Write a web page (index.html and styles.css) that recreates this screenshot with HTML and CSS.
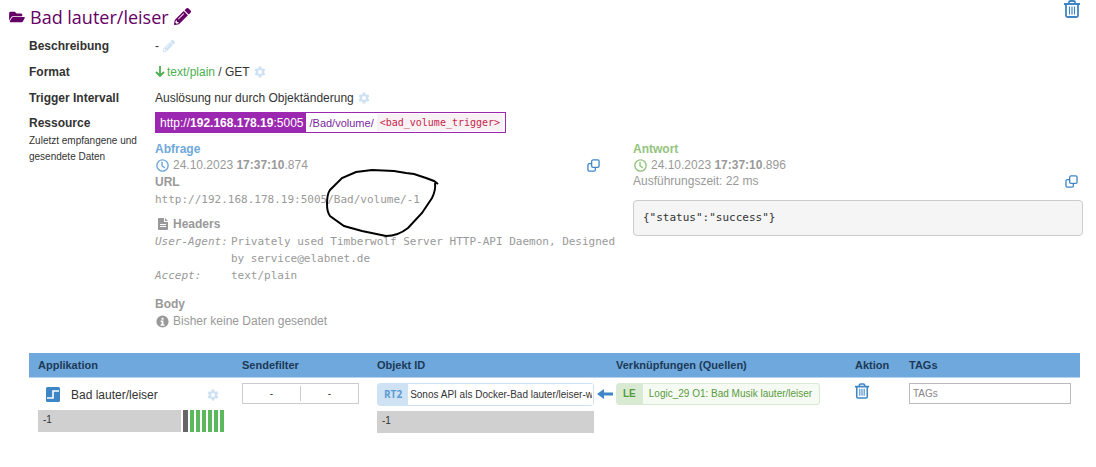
FILE: index.html
```html
<!DOCTYPE html>
<html lang="de">
<head>
	<meta charset="utf-8">
	<title>Bad lauter/leiser</title>
	<link rel="stylesheet" href="styles.css">
</head>
<body>

<!-- shared icons -->
<svg class="sprite" aria-hidden="true">
	<symbol id="i-folder" viewBox="0 0 576 512"><path d="M572.700 292.100L500.300 416.200A64 64 0 0 1 445 448H45c-18.500 0-30-20.100-20.700-36.100l72.400-124.100A64 64 0 0 1 152 256h400c18.500 0 30 20.100 20.700 36.100zM152 224h328v-48c0-26.500-21.500-48-48-48H272l-64-64H48C21.500 64 0 85.500 0 112v278l69-118.400C86.200 242.200 118 224 152 224z"/></symbol>
	<symbol id="i-pencil" viewBox="0 0 512 512"><path d="M498 142l-46 46c-5 5-12 5-17 0L324 77c-5-5-5-12 0-17l46-46c19-19 49-19 68 0l60 60c19 19 19 49 0 68zM284 100L22 362 0 484c-3 16 12 30 28 28l122-22 262-262c5-5 5-12 0-17L301 100c-5-5-12-5-17 0zM124 340c-5-5-5-14 0-19l154-154c5-5 14-5 19 0s5 14 0 19L143 340c-5 5-14 5-19 0zm-36 84h48v36l-64 12-32-32 12-65h36v49z"/></symbol>
	<symbol id="i-gear" viewBox="0 0 24 24"><path fill-rule="evenodd" d="M9.500 1h5l.6 3.300 2 1.200 3.200-1.200 2.500 4.300-2.600 2.200v2.400l2.600 2.200-2.500 4.300-3.200-1.200-2 1.200-.6 3.300h-5l-.6-3.300-2-1.200-3.200 1.200-2.500-4.300 2.600-2.200v-2.400L1.200 8.600l2.500-4.300 3.200 1.200 2-1.200zM12 8a4 4 0 1 0 0 8 4 4 0 0 0 0-8z"/></symbol>
	<symbol id="i-clock" viewBox="0 0 16 16"><g fill="none" stroke="currentColor" stroke-width="1.500"><circle cx="8" cy="8" r="6"/><path d="M7.500 4v4.500l3 2"/></g></symbol>
	<symbol id="i-copy" viewBox="0 0 14 14"><g fill="none" stroke="currentColor" stroke-width="1.400"><rect x="5" y="1" width="8" height="8" rx="1.500"/><path d="M5 5H2.500A1.500 1.500 0 0 0 1 6.500v5A1.500 1.500 0 0 0 2.500 13h5A1.500 1.500 0 0 0 9 11.500V9"/></g></symbol>
	<symbol id="i-trash" viewBox="0 0 16 18"><g fill="none" stroke="currentColor" stroke-width="1.800"><path d="M0 4h16M5 4V2.500Q5 1 6.500 1h3Q11 1 11 2.500V4M2 4v11.500Q2 17 3.500 17h9q1.500 0 1.500-1.500V4"/><path stroke-width="1.200" d="M5.500 6.500v8M8 6.500v8M10.500 6.500v8"/></g></symbol>
</svg>

<header class="title">
	<svg class="folder"><use href="#i-folder"/></svg>
	<h1>Bad lauter/leiser</h1>
	<button type="button" aria-label="Name bearbeiten"><svg class="pencil"><use href="#i-pencil"/></svg></button>
	<button type="button" class="remove" aria-label="Löschen"><svg class="trash-big"><use href="#i-trash"/></svg></button>
</header>

<main>
	<dl class="props">
		<dt>Beschreibung</dt>
		<dd>- <button type="button" class="pale" aria-label="Beschreibung bearbeiten"><svg class="icon"><use href="#i-pencil"/></svg></button></dd>

		<dt>Format</dt>
		<dd>
			<svg class="down" viewBox="0 0 10 12"><path d="M5 0v10M1 6l4 4 4-4" fill="none" stroke="currentColor" stroke-width="1.800"/></svg>
			<span><span class="green">text/plain</span> / GET</span>
			<button type="button" class="pale" aria-label="Format einstellen"><svg class="icon"><use href="#i-gear"/></svg></button>
		</dd>

		<dt>Trigger Intervall</dt>
		<dd>Auslösung nur durch Objektänderung <button type="button" class="pale" aria-label="Trigger einstellen"><svg class="icon"><use href="#i-gear"/></svg></button></dd>

		<dt class="resource">Ressource <small>Zuletzt empfangene und gesendete Daten</small></dt>
		<dd class="resource">
			<div class="url"><span class="host">http://<b>192.168.178.19</b>:5005</span><span class="path">/Bad/volume/</span><code>&lt;bad_volume_trigger&gt;</code></div>

			<div class="exchange">
				<section class="request">
					<h2 class="blue">Abfrage</h2>
					<div class="stamp">
						<svg class="clock blue"><use href="#i-clock"/></svg>
						<span>24.10.2023 <b>17:37:10</b>.874</span>
						<button type="button" class="copy" aria-label="Abfrage kopieren"><svg><use href="#i-copy"/></svg></button>
					</div>
					<h3>URL</h3>
					<p class="mono address">http://192.168.178.19:5005/Bad/volume/-1
						<svg class="marker" viewBox="0 0 114 72"><path d="M112 14L108 11 100 8 88 4 80 3 68 1 46 0 30 2 16 8 4 20Q1 24 1 34 1 42 4 46L18 56 36 61 60 66Q72 66 82 58L96 43 106 28Q110 20 109 13"/></svg>
					</p>
					<h3 class="with-icon">
						<svg class="file" viewBox="0 0 10 12"><path fill-rule="evenodd" d="M1 0h5v4h4v7q0 1-1 1H1q-1 0-1-1V1q0-1 1-1zm6 0l3 3H7zM2 6v1h6V6zm0 2v1h6V8z"/></svg>
						Headers
					</h3>
					<dl class="headers mono">
						<dt>User-Agent:</dt><dd>Privately used Timberwolf Server HTTP-API Daemon, Designed by service@elabnet.de</dd>
						<dt>Accept:</dt><dd>text/plain</dd>
					</dl>
					<h3>Body</h3>
					<p class="stamp">
						<svg class="clock" viewBox="0 0 16 16"><path fill-rule="evenodd" d="M8 1.500a6.500 6.500 0 1 0 0 13 6.500 6.500 0 0 0 0-13zM7 4h2v2H7zM6 7h3v4h1v1.500H6V11h1V8.500H6z"/></svg>
						<span>Bisher keine Daten gesendet</span>
					</p>
				</section>

				<section class="response">
					<h2 class="lime">Antwort</h2>
					<div class="stamp">
						<svg class="clock lime"><use href="#i-clock"/></svg>
						<span>24.10.2023 <b>17:37:10</b>.896</span>
					</div>
					<div class="stamp">
						<span>Ausführungszeit: 22 ms</span>
						<button type="button" class="copy" aria-label="Antwort kopieren"><svg><use href="#i-copy"/></svg></button>
					</div>
					<pre class="mono">{"status":"success"}</pre>
				</section>
			</div>
		</dd>
	</dl>

	<table>
		<colgroup>
			<col class="c-app"><col class="c-filter"><col class="c-object"><col class="c-arrow"><col class="c-links"><col class="c-action"><col>
		</colgroup>
		<thead>
			<tr>
				<th>Applikation</th>
				<th>Sendefilter</th>
				<th>Objekt ID</th>
				<th class="tight"></th>
				<th class="tight">Verknüpfungen (Quellen)</th>
				<th>Aktion</th>
				<th>TAGs</th>
			</tr>
		</thead>
		<tbody>
			<tr>
				<td>
					<div class="app">
						<svg class="app-icon" viewBox="0 0 14 15"><rect width="14" height="15" rx="1.500" fill="#3d85c6"/><path d="M1 11h6V4h6" fill="none" stroke="#fff" stroke-width="1.600"/></svg>
						<span>Bad lauter/leiser</span>
						<button type="button" class="pale" aria-label="Applikation einstellen"><svg class="icon"><use href="#i-gear"/></svg></button>
					</div>
					<div class="state">
						<div class="value">-1</div>
						<div class="bars"><i class="dark"></i><i></i><i></i><i></i><i></i><i></i><i></i></div>
					</div>
				</td>
				<td><div class="filter"><span>-</span><span>-</span></div></td>
				<td>
					<div class="object"><label for="object">RT2</label><input id="object" type="text" value="Sonos API als Docker-Bad lauter/leiser-w"></div>
					<div class="value">-1</div>
				</td>
				<td class="tight"><svg class="arrow" viewBox="0 0 16 12"><path d="M0 6l7-5v3.500h9v3H7V11z" fill="#3d85c6"/></svg></td>
				<td class="tight"><a class="link" href="#"><span>LE</span><span>Logic_29 O1: Bad Musik lauter/leiser</span></a></td>
				<td><button type="button" class="action" aria-label="Verknüpfung löschen"><svg class="trash"><use href="#i-trash"/></svg></button></td>
				<td><input class="tags" type="text" placeholder="TAGs" aria-label="TAGs"></td>
			</tr>
		</tbody>
	</table>
</main>

</body>
</html>
```

FILE: styles.css
```css
* {
  box-sizing: border-box;
}

body {
  margin: 0;
  font: 12px/16px "Liberation Sans", Arial, sans-serif;
  color: #333;
  background: #fff;
}

h1, h2, h3, p, dl, dd, pre {
  margin: 0;
}

h2, h3 {
  font-size: 12px;
}

button {
  display: inline-flex;
  padding: 0;
  border: 0;
  background: none;
  color: inherit;
  cursor: pointer;
}

svg {
  display: block;
  flex: none;
  fill: currentColor;
}

.sprite {
  position: absolute;
  width: 0;
  height: 0;
}

.blue { color: #6fa8dc; }
.lime { color: #93c47d; }
.green { color: #4caf50; }
.pale { color: #cfe2f3; }

.icon {
  width: 12px;
  height: 12px;
}

/* title */

.title {
  display: flex;
  align-items: center;
  height: 33px;
  padding: 0 16px 0 9px;
  color: #660066;
}

.title h1 {
  margin: 0 5px;
  font: 500 18px/24px "Open Sans", sans-serif;
}

.folder {
  width: 16px;
  height: 14px;
}

.pencil {
  width: 17px;
  height: 17px;
}

.remove {
  margin-left: auto;
  align-self: flex-start;
  color: #3d85c6;
}

.trash-big {
  width: 16px;
  height: 18px;
}

/* properties */

main {
  padding: 0 13px 0 29px;
}

.props {
  display: grid;
  grid-template-columns: 126px 1fr;
}

.props > dt {
  font-weight: bold;
  line-height: 26px;
}

.props > dt.resource {
  line-height: 24px;
}

.props > dd {
  display: flex;
  align-items: center;
  gap: 4px;
  min-height: 26px;
}

.props > dt small {
  display: block;
  margin-top: -2px;
  font-size: 10px;
  font-weight: normal;
  line-height: 16px;
}

.props > dd.resource {
  display: block;
  padding-top: 1px;
  min-width: 0;
}

.down {
  width: 10px;
  height: 12px;
  color: #4caf50;
  margin-right: -2px;
}

.url {
  display: inline-flex;
  align-items: center;
  height: 21px;
  border: 1px solid #9c27b0;
  color: #7b1fa2;
  vertical-align: top;
}

.host {
  padding: 2px 3px 2px 4px;
  background: #9c27b0;
  color: #fff;
}

.path {
  padding: 0 3px;
  font-size: 11px;
}

.url code {
  margin-right: 2px;
  padding: 0 3px;
  background: #f9f2f4;
  color: #c7254e;
  font: 10px/17px "DejaVu Sans Mono", monospace;
}

.exchange {
  display: grid;
  grid-template-columns: 1fr 1fr;
  gap: 28px;
  padding-top: 8px;
  color: #999;
}

.stamp {
  display: flex;
  align-items: center;
  gap: 3px;
  height: 16px;
}

.clock {
  width: 15px;
  height: 15px;
}

.copy {
  margin-left: auto;
  margin-right: 5px;
  color: #3d85c6;
}

.copy svg {
  width: 13px;
  height: 13px;
}

.mono {
  font: 11px/17px "DejaVu Sans Mono", monospace;
}

.address {
  position: relative;
}

/* hand-drawn ring round the end of the address */
.marker {
  position: absolute;
  left: 171px;
  top: -21px;
  width: 114px;
  height: 72px;
  overflow: visible;
  fill: none;
  stroke: #000;
  stroke-width: 2;
}

.with-icon {
  display: flex;
  align-items: center;
  gap: 5px;
  padding: 7px 0 0 3px;
}

.file {
  width: 10px;
  height: 12px;
}

.headers {
  display: grid;
  grid-template-columns: 76px 1fr;
  margin-right: -12px;
  padding-bottom: 11px;
}

.headers dt {
  font-style: italic;
}

.request h3 {
  line-height: 18px;
}

.response pre {
  margin-top: 11px;
  padding: 8px 9px;
  border: 1px solid #ccc;
  border-radius: 4px;
  background: #f5f5f5;
  color: #333;
  line-height: 18px;
}

/* object table */

table {
  width: calc(100% - 3px);
  margin-top: 24px;
  table-layout: fixed;
  border-collapse: collapse;
}

.c-app { width: 204px; }
.c-filter { width: 135px; }
.c-object { width: 229px; }
.c-arrow { width: 19px; }
.c-links { width: 230px; }
.c-action { width: 54px; }

th {
  height: 24px;
  padding: 0 9px;
  background: #6fa8dc;
  border-bottom: 1px solid #b8d3ee;
  color: #1c3a57;
  font-size: 11px;
  text-align: left;
}

td {
  padding: 5px 9px;
  vertical-align: top;
  font-size: 10px;
}

td:nth-child(3) {
  padding-right: 3px;
}

th.tight, td.tight {
  padding-left: 0;
  padding-right: 0;
}

.app {
  display: flex;
  align-items: center;
  gap: 11px;
  height: 24px;
  padding: 0 5px 0 8px;
  font-size: 12px;
}

.app .pale {
  margin-left: auto;
}

.app-icon {
  width: 14px;
  height: 15px;
}

.state {
  display: flex;
  gap: 2px;
  margin-top: 3px;
}

.value {
  flex: 1;
  height: 22px;
  padding: 3px 5px;
  background: #d0d0d0;
  line-height: 14px;
}

.bars {
  display: flex;
  gap: 2px;
}

.bars i {
  width: 4px;
  background: #5cb85c;
}

.bars .dark {
  width: 5px;
  background: #666;
}

.filter {
  display: flex;
  height: 21px;
  padding: 2px 0;
  border: 1px solid #ccc;
}

.filter span {
  flex: 1;
  text-align: center;
}

.filter span + span {
  border-left: 1px solid #ccc;
}

.object {
  display: flex;
  height: 23px;
  margin-bottom: 5px;
  border: 1px solid #cfe2f3;
  border-radius: 3px;
}

.object label {
  padding: 0 6px;
  background: #cfe2f3;
  color: #5b9bd5;
  font: bold 10px/21px "Open Sans", sans-serif;
}

.object input {
  flex: 1;
  min-width: 0;
  padding: 0 1px 0 2px;
  border: 0;
  color: #333;
  font: 10px "Liberation Sans", Arial, sans-serif;
}

.arrow {
  width: 16px;
  height: 12px;
  margin-top: 5px;
}

.link {
  display: inline-flex;
  height: 22px;
  border: 1px solid #d9ead3;
  border-radius: 3px;
  background: #f5fbf2;
  color: #5a9a3f;
  line-height: 20px;
  text-decoration: none;
}

.link span {
  padding: 0 7px 0 6px;
}

.link span:first-child {
  background: #d9ead3;
  font-weight: bold;
}

.action {
  color: #3d85c6;
}

.trash {
  width: 14px;
  height: 16px;
}

.tags {
  width: 100%;
  height: 21px;
  padding: 0 3px;
  border: 1px solid #bbb;
  font: 10px "Liberation Sans", Arial, sans-serif;
}

.tags::placeholder {
  color: #888;
}
```
